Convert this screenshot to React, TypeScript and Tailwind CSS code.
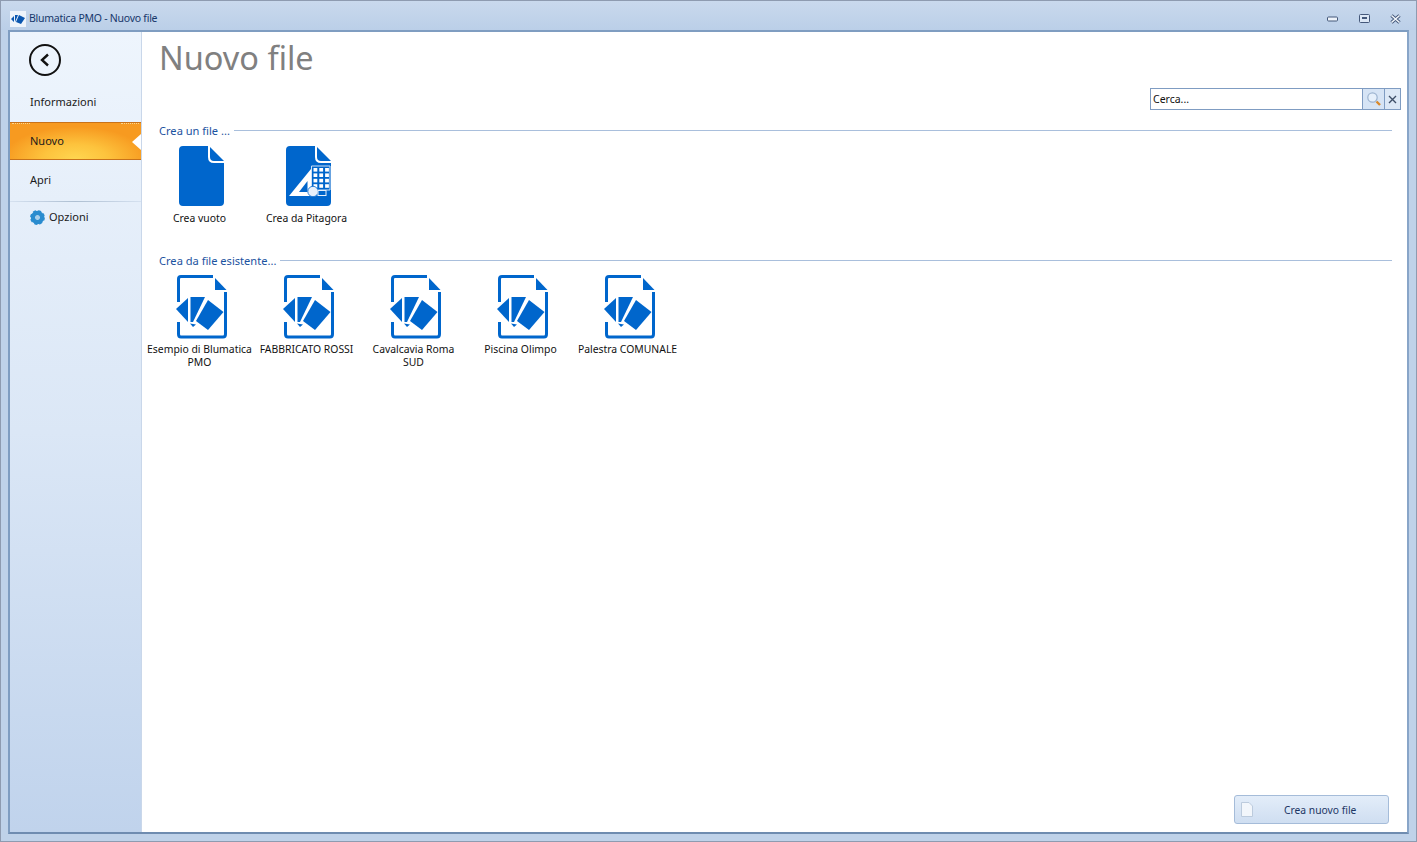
const FONT = "font-['Noto_Sans','Open_Sans',sans-serif]";

function Fold() {
  return <path d="M31 1 L45 15 H35 Q31 15 31 11 Z" fill="#0066cc" />;
}

function BlankFile({ children }: { children?: React.ReactNode }) {
  return (
    <svg width="45" height="60" viewBox="0 0 45 60">
      <path d="M4 0 H29 V11 Q29 17 35 17 H45 V56 Q45 60 41 60 H4 Q0 60 0 56 V4 Q0 0 4 0 Z" fill="#0066cc" />
      <Fold />
      {children}
    </svg>
  );
}

function PitagoraFile() {
  const cells: React.ReactNode[] = [];
  for (let r = 0; r < 4; r++)
    for (let c = 0; c < 3; c++)
      cells.push(<rect key={r + "-" + c} x={27.5 + c * 5.8} y={22 + r * 5.4} width="3.8" height="3.6" fill="#fff" />);
  return (
    <BlankFile>
      <path d="M25.5 20 H44 V44 H25.5 Z" fill="none" stroke="#cfe0f4" strokeWidth="1" />
      {cells}
      <path d="M3 50 L25 23 V50 Z" fill="#fff" />
      <path d="M13 46 L21.5 35 V46 Z" fill="#0066cc" />
      <circle cx="27" cy="45.5" r="5.2" fill="#e9f1fb" stroke="#0066cc" strokeWidth="0.8" />
      <rect x="32" y="44.5" width="8" height="5" fill="#0066cc" stroke="#e9f1fb" strokeWidth="1" />
    </BlankFile>
  );
}

function ExistingFile() {
  return (
    <svg width="50" height="64" viewBox="0 0 50 64" className="overflow-visible">
      <path d="M1.5 27 V4 Q1.5 1.5 4 1.5 H36" fill="none" stroke="#0066cc" strokeWidth="3" />
      <path d="M1.5 47 V59 Q1.5 62 4 62 H46 Q48.5 62 48.5 59 V17" fill="none" stroke="#0066cc" strokeWidth="3" />
      <path d="M38 3 L49.5 15 H38 Z" fill="#0066cc" />
      <path d="M-1 34 L11 23 V47 Z" fill="#0066cc" />
      <path d="M13.5 22 H28 L16 47 H13.5 Z" fill="#0066cc" />
      <path d="M31 25 L46.5 37 L31 55 L19 46 Z" fill="#0066cc" />
      <path d="M13 48.5 L19 49.5 L16 52 Z" fill="#0066cc" />
    </svg>
  );
}

function Tile({ label, children, tight }: { label: string; children: React.ReactNode; tight?: boolean }) {
  return (
    <div className="flex w-[107px] shrink-0 flex-col items-center">
      <div className="ml-[4px] flex">{children}</div>
      <div className={`${tight ? "mt-[4px]" : "mt-[6px]"} w-[107px] whitespace-pre-line text-center text-[10.4px] leading-[13px] text-[#111]`}>{label}</div>
    </div>
  );
}

function Section({ title }: { title: string }) {
  return (
    <div className="ml-[17px] mr-[15px] flex items-center gap-[4px]">
      <span className="pt-px text-[11.1px] leading-[16px] text-[#1b52a0]">{title}</span>
      <div className="h-px flex-1 bg-[#a9bfdc]" />
    </div>
  );
}

export default function App() {
  const names = ["Esempio di Blumatica\nPMO", "FABBRICATO ROSSI", "Cavalcavia Roma\nSUD", "Piscina Olimpo", "Palestra COMUNALE"];
  return (
    <div className={`${FONT} flex h-[842px] w-[1417px] flex-col overflow-hidden border border-[#8e9bb0] bg-[#bfd2e9]`}>
      <div className="flex h-[29px] shrink-0 items-center bg-gradient-to-b from-[#c9d9ed] to-[#bbcfe8] pl-[9px] pr-[15px] pt-[6px]">
        <div className="flex h-[16px] w-[16px] items-center justify-center bg-[#eef4fb]">
          <svg width="15" height="12" viewBox="0 0 15 12">
            <path d="M0 6 L3 3 V9 Z M4 2 H7 L4 9 Z M8 2 L14 5 L10 11 L5 9 Z" fill="#0b57b0" />
          </svg>
        </div>
        <span className="ml-[3px] text-[10.5px] tracking-[-0.25px] text-[#17376b]">Blumatica PMO - Nuovo file</span>
        <div className="ml-auto flex items-center">
          <svg width="11" height="6" viewBox="0 0 11 6"><rect x="0.5" y="1" width="10" height="4" rx="1" fill="#eef3fa" stroke="#44587a" /></svg>
          <svg className="ml-[21px]" width="11" height="9" viewBox="0 0 11 9"><rect x="0.5" y="0.5" width="10" height="8" rx="1" fill="#dce7f5" stroke="#44587a" /><rect x="3" y="3" width="5" height="2" fill="#44587a" /></svg>
          <svg className="ml-[20px]" width="11" height="10" viewBox="0 0 11 10"><path d="M1.5 1.5 L9.5 8.5 M9.5 1.5 L1.5 8.5" stroke="#44587a" strokeWidth="3.4" /><path d="M1.5 1.5 L9.5 8.5 M9.5 1.5 L1.5 8.5" stroke="#f2f6fb" strokeWidth="1.6" /></svg>
        </div>
      </div>

      <div className="mx-[7px] mb-[7px] flex min-h-0 flex-1 border-2 border-[#7f9dc1] border-r-[#88a5c8] border-b-[#6f8cb0]">
        <aside className="flex w-[132px] shrink-0 flex-col border-r border-[#c9d7ea] bg-gradient-to-b from-[#eef5fd] via-[#dbe7f6] to-[#c0d3ec]">
          <div className="ml-[19px] mt-[12px] flex h-[32px] w-[32px] items-center justify-center rounded-full border-2 border-[#111]">
            <svg width="12" height="14" viewBox="0 0 12 14"><path d="M9 1.5 L3 7 L9 12.5" fill="none" stroke="#111" strokeWidth="2.4" /></svg>
          </div>
          <div className="mt-[7px] flex h-[39px] items-center pl-[20px] text-[11px] text-[#1a1a1a]">Informazioni</div>
          <div className="relative flex h-[38px] items-center border-y border-[#c8721a] bg-[radial-gradient(ellipse_55%_90%_at_50%_100%,#ffd650_0%,#fdc33d_45%,#f79a20_100%)] pl-[20px] text-[11px] text-[#1a1a1a]">
            Nuovo
            <div className="absolute left-[2px] top-0 w-[18px] border-t border-dotted border-[#fbd58e]" />
            <div className="absolute right-[2px] top-0 w-[18px] border-t border-dotted border-[#fbd58e]" />
            <svg className="absolute right-0 top-[11px]" width="9" height="16" viewBox="0 0 9 16"><path d="M9 0 L0 8 L9 16 Z" fill="#fff" /></svg>
          </div>
          <div className="flex h-[41px] items-center pl-[20px] text-[11px] text-[#1a1a1a]">Apri</div>
          <div className="h-px bg-gradient-to-r from-[#d5e1f0] via-[#aebfd2] to-[#d5e1f0]" />
          <div className="flex h-[31px] items-center pl-[20px] text-[11px] text-[#1a1a1a]">
            <svg width="15" height="15" viewBox="0 0 15 15" className="mr-[4px]">
              <circle cx="7.5" cy="7.5" r="4.5" fill="none" stroke="#2a8ccf" strokeWidth="4.4" />
              <circle cx="7.5" cy="7.5" r="6.4" fill="none" stroke="#2a8ccf" strokeWidth="2" strokeDasharray="3 2" />
              <circle cx="7.5" cy="7.5" r="2" fill="#a9cfea" />
            </svg>
            Opzioni
          </div>
        </aside>

        <main className="flex min-w-0 flex-1 flex-col bg-white">
          <h1 className="ml-[17px] mt-[1px] h-[50px] text-[32.5px] font-normal leading-[50px] text-[#808080]">Nuovo file</h1>
          <div className="mr-[6px] mt-[5px] flex h-[22px] self-end border border-[#7f9cc2] text-[10.5px]">
            <div className="flex w-[211px] items-center pl-[2px] pt-px text-[#111]">Cerca...</div>
            <div className="flex w-[22px] items-center justify-center border-l border-[#7f9cc2] bg-[#d6e4f5]">
              <svg width="16" height="16" viewBox="0 0 16 16">
                <circle cx="6.5" cy="6.5" r="4.7" fill="#e6f0fb" stroke="#9db4d0" strokeWidth="1.2" />
                <path d="M10.5 10.5 L14 14" stroke="#d9892b" strokeWidth="2.4" />
              </svg>
            </div>
            <div className="flex w-[16px] items-center justify-center border-l border-[#7f9cc2] bg-[#dce8f6]">
              <svg width="9" height="9" viewBox="0 0 9 9"><path d="M1 1 L8 8 M8 1 L1 8" stroke="#3e4f68" strokeWidth="1.4" /></svg>
            </div>
          </div>

          <div className="mt-[12px]"><Section title="Crea un file ..." /></div>
          <div className="ml-[4px] mt-[7px] flex">
            <Tile label="Crea vuoto"><BlankFile /></Tile>
            <Tile label="Crea da Pitagora"><PitagoraFile /></Tile>
          </div>

          <div className="mt-[27px]"><Section title="Crea da file esistente..." /></div>
          <div className="ml-[4px] mt-[6px] flex">
            {names.map((n) => (
              <Tile key={n} label={n} tight><ExistingFile /></Tile>
            ))}
          </div>

          <div className="mb-[8px] mr-[18px] mt-auto flex h-[29px] w-[155px] items-center self-end rounded-[3px] border border-[#a5bcd9] bg-gradient-to-b from-[#e3edf9] to-[#cfdef1] pl-[6px] text-[10.3px] text-[#1c3664]">
            <svg width="12" height="15" viewBox="0 0 12 15"><path d="M0.5 0.5 H8 L11.5 4 V14.5 H0.5 Z" fill="#f2f6fb" stroke="#bccbdd" /></svg>
            <span className="ml-[31px] pt-[2px]">Crea nuovo file</span>
          </div>
        </main>
      </div>
    </div>
  );
}
